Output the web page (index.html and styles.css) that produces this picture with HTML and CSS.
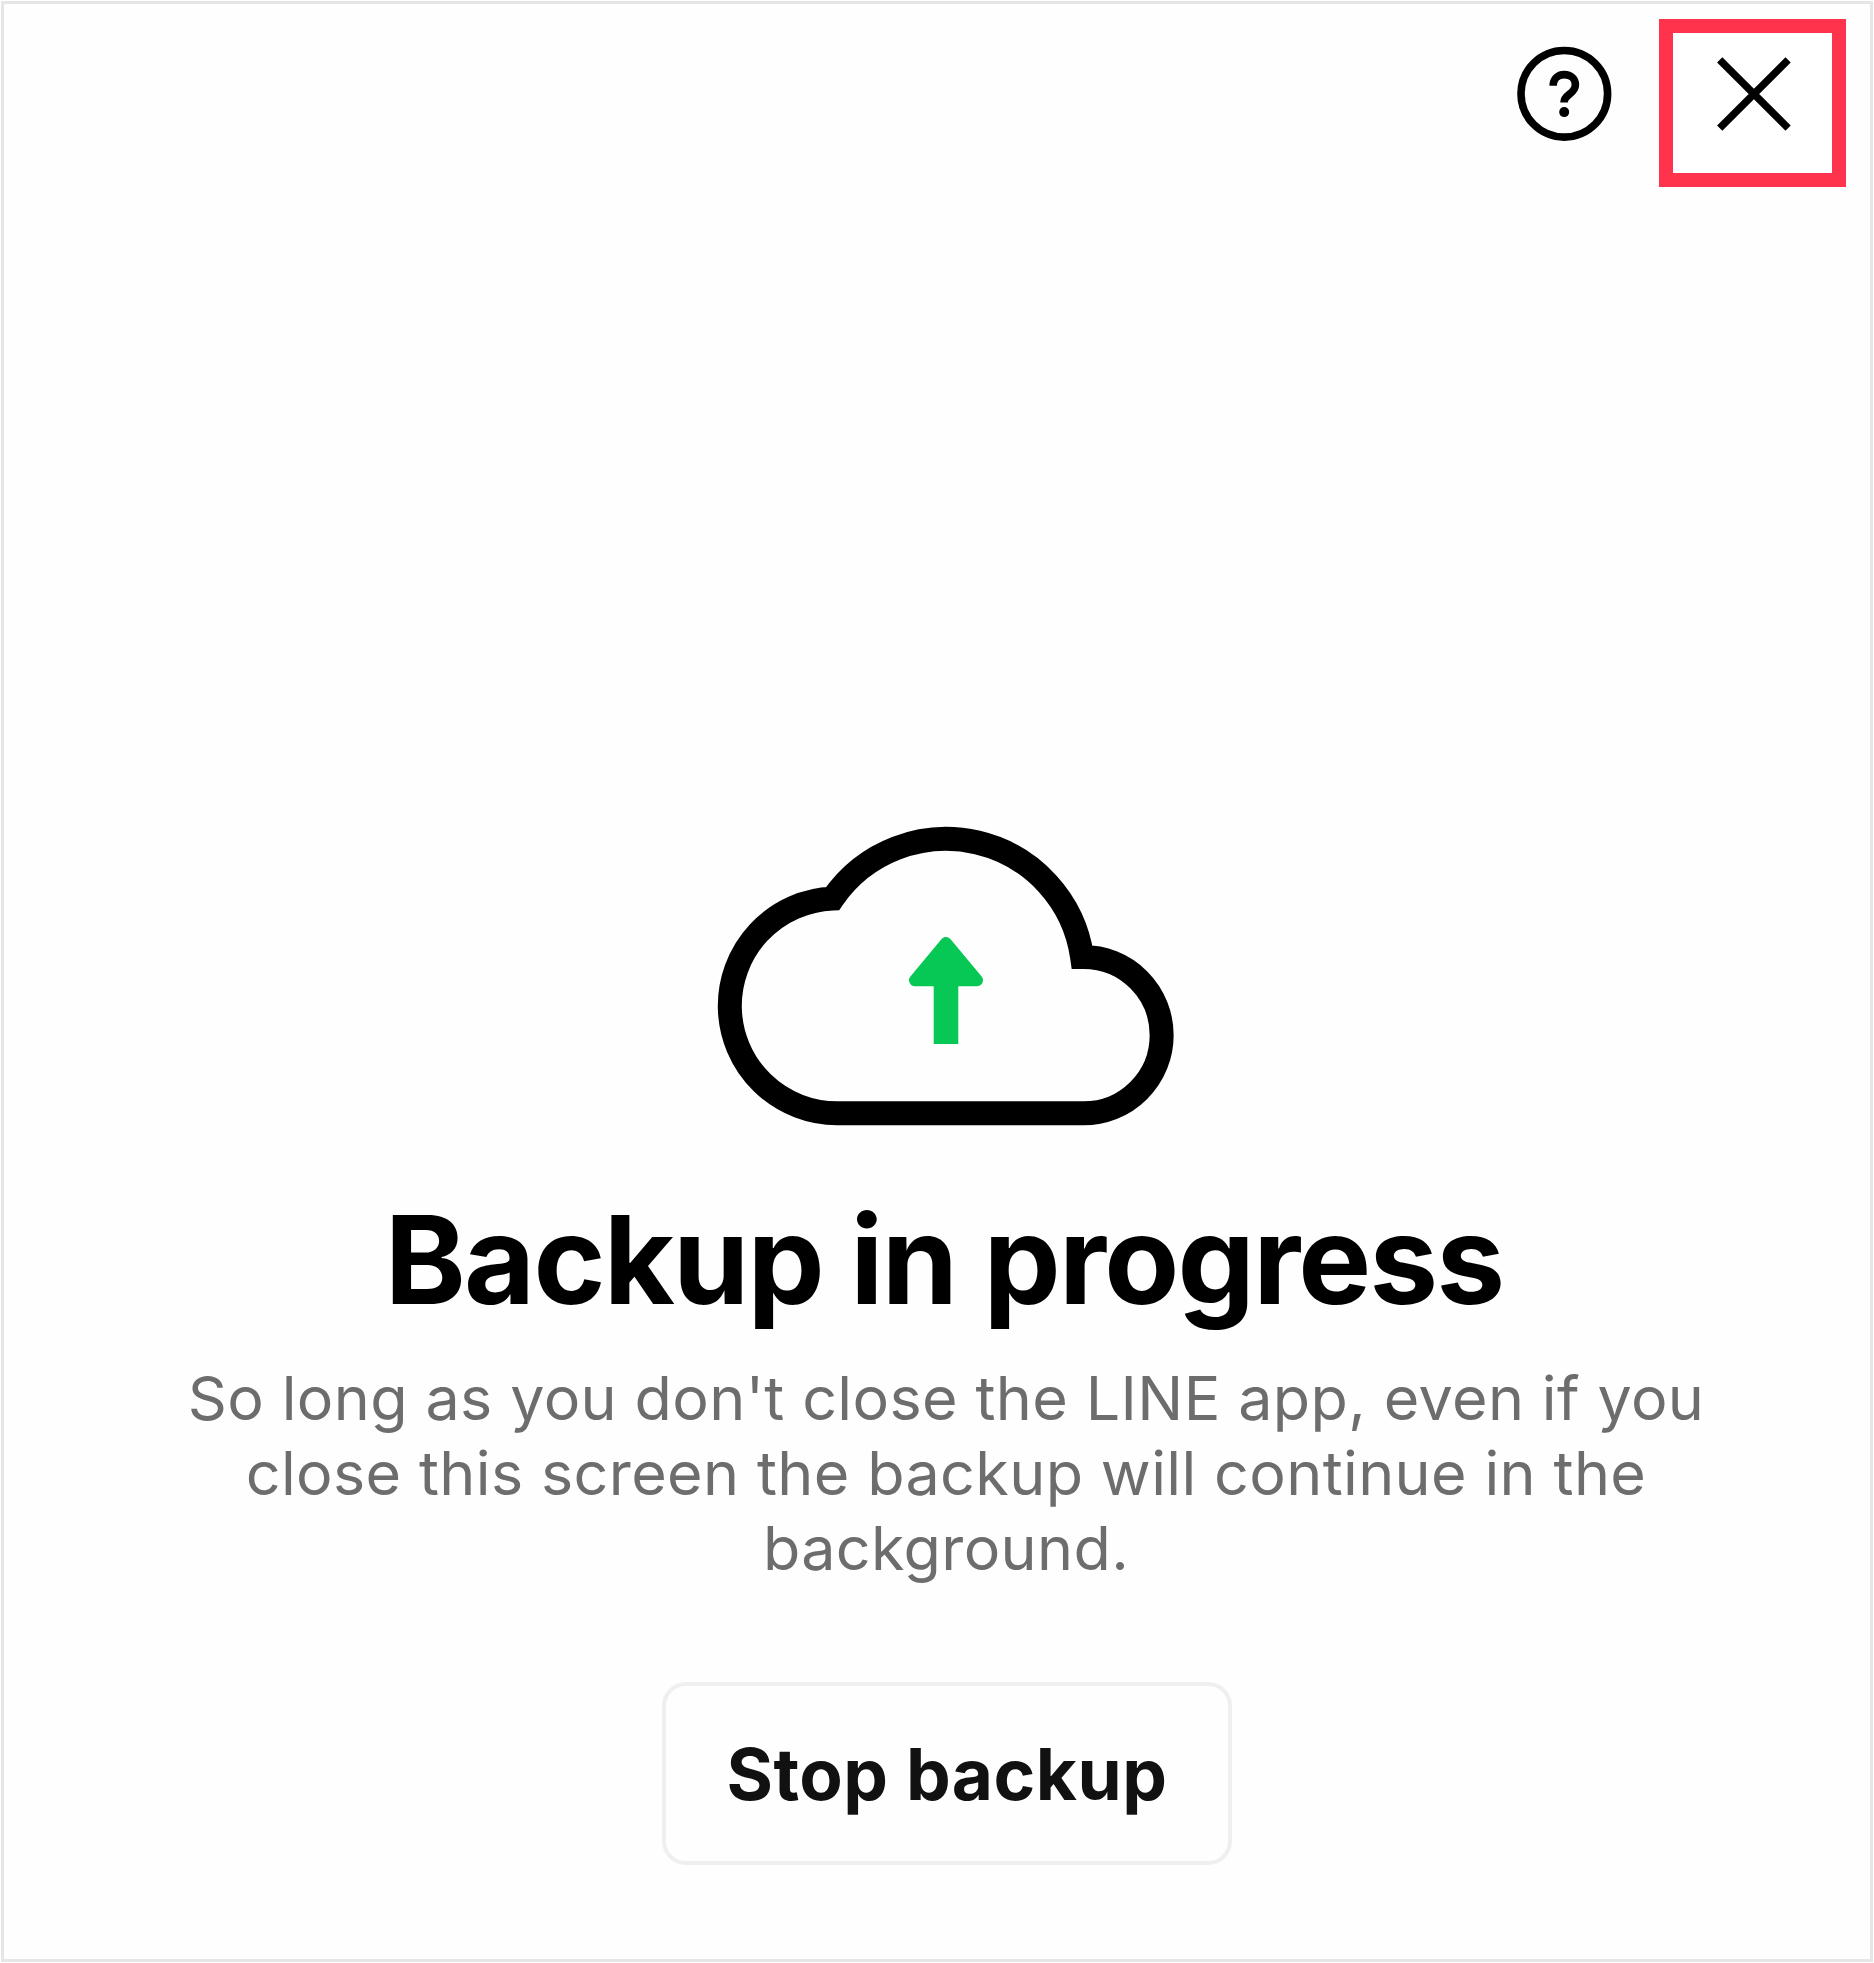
FILE: index.html
```html
<!DOCTYPE html>
<html lang="en">
<head>
<meta charset="utf-8">
<title>Backup in progress</title>
<link rel="stylesheet" href="styles.css">
</head>
<body>
<main class="screen">
  <header class="toolbar">
    <svg class="help-icon" viewBox="0 0 96 96" role="img" aria-label="Help">
      <circle cx="48.3" cy="47.8" r="43.3" fill="none" stroke="#000" stroke-width="7.6"/>
      <path d="M37.2 39.8C37.2 33.2 41.6 28.6 48.2 28.6C55 28.6 59.4 33 59.4 38.8C59.4 48.4 48 47.8 48 56.6" fill="none" stroke="#000" stroke-width="7.6"/>
      <circle cx="48.2" cy="66.1" r="5"/>
    </svg>
    <div class="close-frame">
      <svg class="close-icon" viewBox="0 0 76 74" role="img" aria-label="Close">
        <path d="M4.7 2.8L73.1 71.2M73.1 2.8L4.7 71.2" fill="none" stroke="#000" stroke-width="7.4"/>
      </svg>
    </div>
  </header>
  <section class="status">
    <svg class="cloud" viewBox="716 824 460 304" aria-hidden="true">
      <path d="M837.8 1113.3A107.5 107.5 0 0 1 832.7 898.4A137.5 137.5 0 0 1 1082.1 957H1083.5A78.15 78.15 0 0 1 1083.5 1113.3Z" fill="none" stroke="#000" stroke-width="24"/>
      <path d="M946 943L915 980.3H977Z" fill="#07c755" stroke="#07c755" stroke-width="12" stroke-linejoin="round"/>
      <path d="M933.7 980H958.3V1044H933.7Z" fill="#07c755"/>
    </svg>
    <h1 class="title">Backup in progress</h1>
    <p class="message">So long as you don't close the LINE app, even if you<br>close this screen the backup will continue in the<br>background.</p>
    <button class="stop-button" type="button">Stop backup</button>
  </section>
</main>
</body>
</html>
```
FILE: styles.css
```css
* {
  box-sizing: border-box;
}

body {
  margin: 0;
  padding: 1px;
  background: #fff;
  font-family: Inter, "Liberation Sans", sans-serif;
}

.screen {
  width: 1872px;
  height: 1961px;
  border: 3px solid #e6e6e6;
  background: #fefefe;
}

.toolbar {
  display: flex;
  justify-content: flex-end;
  align-items: flex-start;
  gap: 47px;
  height: 820px;
  padding: 15px 24px 0 0;
}

.help-icon {
  width: 96px;
  height: 96px;
  margin-top: 27px;
}

.close-frame {
  display: flex;
  justify-content: center;
  width: 187px;
  height: 168px;
  padding-top: 24px;
  border: 14px solid #ff334b;
  background: #fff;
}

.close-icon {
  width: 76px;
  height: 74px;
}

.status {
  display: flex;
  flex-direction: column;
  align-items: center;
  padding-left: 18px;
}

.cloud {
  width: 460px;
  height: 304px;
}

.title {
  margin: 58px 0 0;
  padding-right: 4px;
  font-size: 122.5px;
  font-weight: 700;
  line-height: 148px;
  letter-spacing: -1.75px;
  white-space: nowrap;
  color: #000;
}

.message {
  margin: 27px 0 0;
  font-size: 61px;
  line-height: 75px;
  letter-spacing: 0.37px;
  text-align: center;
  white-space: nowrap;
  color: #6d6d6d;
}

.stop-button {
  width: 570px;
  height: 183px;
  margin: 96px 0 0 2px;
  padding: 0;
  border: 4px solid #efefef;
  border-radius: 24px;
  background: #fefefe;
  font: 700 71px Inter, "Liberation Sans", sans-serif;
  letter-spacing: 0.5px;
  white-space: nowrap;
  color: #111;
}
```
